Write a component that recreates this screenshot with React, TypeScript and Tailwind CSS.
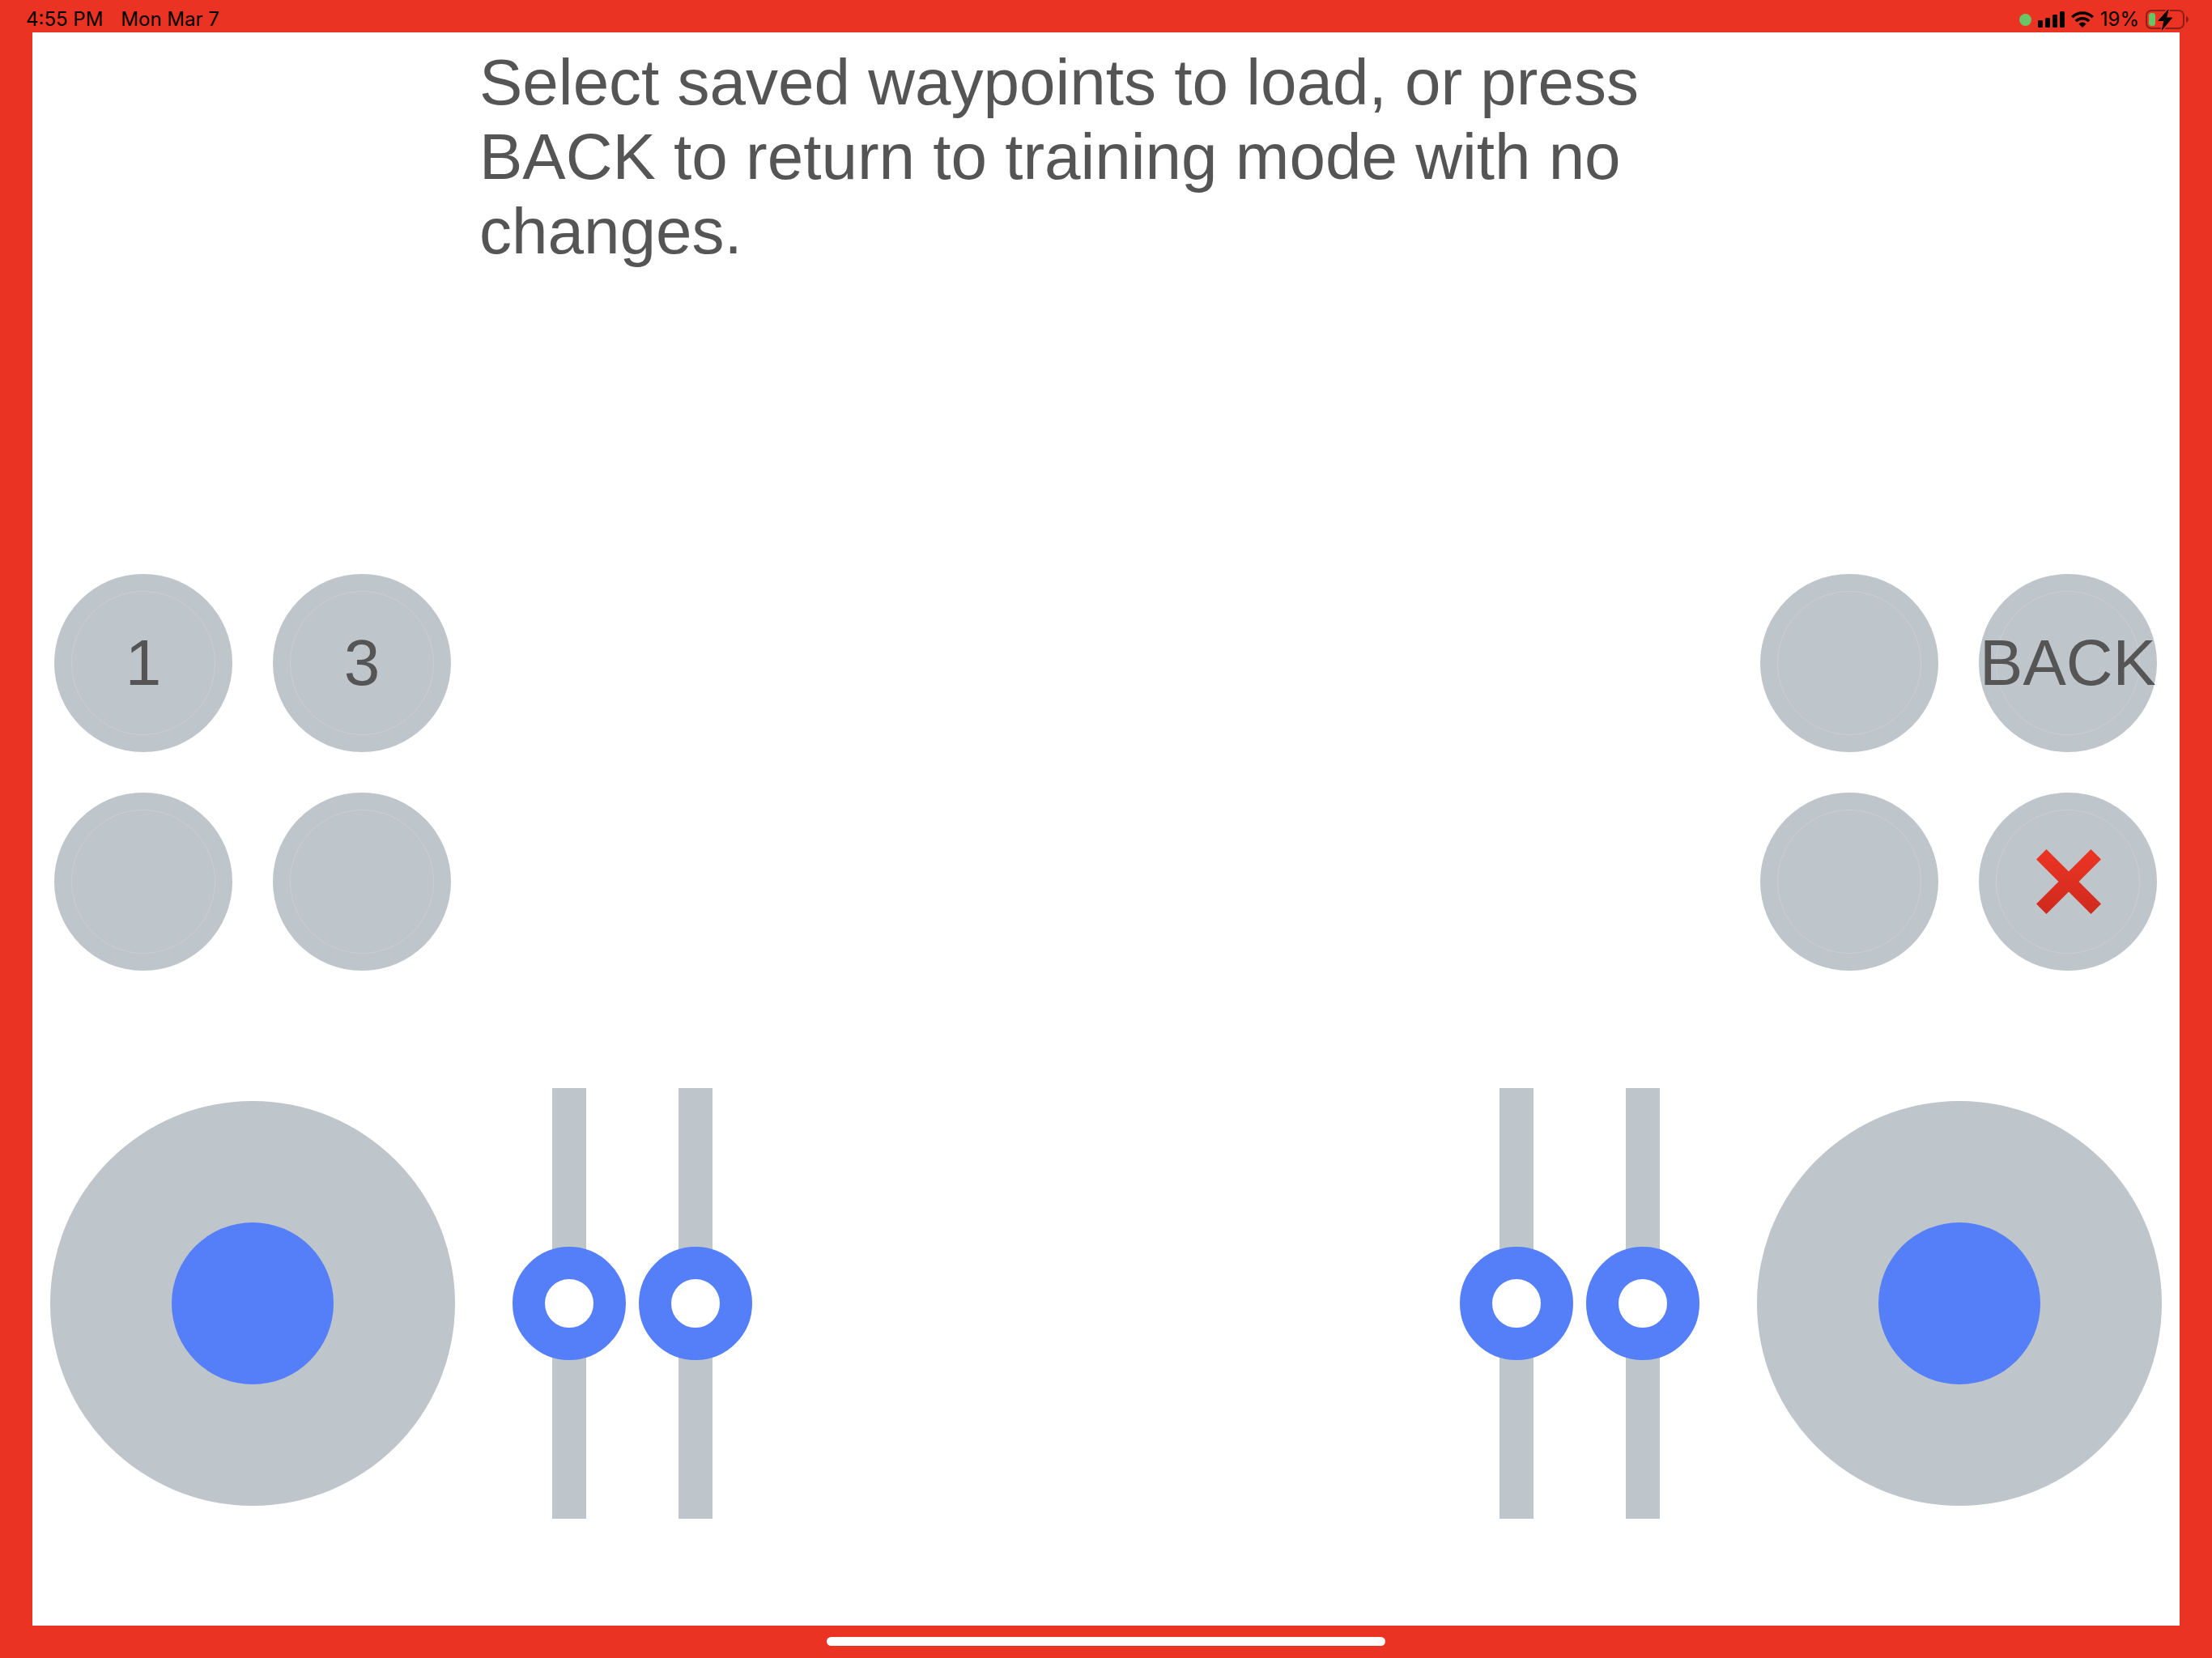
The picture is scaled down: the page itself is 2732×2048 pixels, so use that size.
import React from "react";

type PadKey = { id: string; label?: string; icon?: React.ReactNode };

function CrossMark() {
  return (
    <svg viewBox="0 0 82 80" className="h-20 w-[82px]" aria-hidden="true">
      <defs>
        <linearGradient id="cross" x1="0" y1="0" x2="0" y2="1">
          <stop offset="0" stopColor="#ec3524" />
          <stop offset="1" stopColor="#cf2a1e" />
        </linearGradient>
      </defs>
      <path
        d="M14.500 0 42 27.500 69.500 0 82 12.500 54.500 40 82 67.500 69.500 80 42 52.500 14.500 80 2 67.500 29.500 40 2 12.500Z"
        fill="url(#cross)"
      />
    </svg>
  );
}

function SignalIcon() {
  return (
    <svg viewBox="0 0 33 20" className="h-5 w-[33px]" aria-hidden="true">
      <rect x="0" y="11" width="6" height="9" rx="1.5" />
      <rect x="9" y="8" width="6" height="12" rx="1.5" />
      <rect x="18" y="4" width="6" height="16" rx="1.5" />
      <rect x="27" y="0" width="6" height="20" rx="1.5" />
    </svg>
  );
}

function WifiIcon() {
  return (
    <svg viewBox="0 0 28 20" className="h-5 w-7" aria-hidden="true">
      <g fill="none" stroke="#000" strokeWidth="3.6">
        <path d="M1.300 7.200a18.200 18.200 0 0 1 25.400 0" />
        <path d="M5.800 12a11.800 11.800 0 0 1 16.400 0" />
      </g>
      <path d="M14 20l-4.600-4.600a6.500 6.500 0 0 1 9.200 0z" />
    </svg>
  );
}

function BatteryIcon() {
  return (
    <svg viewBox="0 0 54 24" className="h-6 w-[54px] overflow-visible" aria-hidden="true">
      <rect x="1" y="1" width="46" height="22" rx="6" fill="none" stroke="#8f1f16" strokeWidth="2" />
      <path d="M50 8c4 1.500 4 6.500 0 8z" fill="#8f1f16" />
      <rect x="4" y="4" width="8" height="16" rx="3.500" fill="#69c466" />
      <path
        d="M28 0 16 13.500h7L20.500 24.500 32.500 10h-7z"
        fill="none"
        stroke="#ea3323"
        strokeWidth="4"
      />
      <path
        d="M28 0 16 13.500h7L20.500 24.500 32.500 10h-7z"
        fill="#000"
        stroke="#000"
        strokeLinejoin="round"
      />
    </svg>
  );
}

function StatusBar() {
  return (
    <header className="flex h-10 items-center justify-between pt-2 pr-7 pl-8 font-['Inter',sans-serif] text-[24px] leading-8 font-normal text-black">
      <div className="flex gap-[22px]">
        <time>4:55 PM</time>
        <span>Mon Mar 7</span>
      </div>
      <div className="flex items-center gap-2">
        <span className="size-[15px] rounded-full bg-[#69c466]" />
        <SignalIcon />
        <WifiIcon />
        <span>19%</span>
        <BatteryIcon />
      </div>
    </header>
  );
}

function KeyPad({ name, keys }: { name: string; keys: PadKey[] }) {
  return (
    <div role="group" aria-label={name} className="grid grid-cols-2 gap-[50px]">
      {keys.map((key) => (
        <button
          key={key.id}
          type="button"
          aria-label={key.label ?? key.id}
          className="grid size-[220px] place-items-center rounded-full bg-[#bec5cb] p-[21px] whitespace-nowrap"
        >
          <span className="flex size-[178px] items-center justify-center rounded-full border border-[#cad0d2]">
            {key.label ?? key.icon}
          </span>
        </button>
      ))}
    </div>
  );
}

function Joystick({ name }: { name: string }) {
  return (
    <div className="flex size-[500px] items-center justify-center rounded-full bg-[#bec5cb]">
      <button type="button" aria-label={name} className="size-[200px] rounded-full bg-[#557ff8]" />
    </div>
  );
}

function Fader({ name }: { name: string }) {
  return (
    <input
      type="range"
      min={-100}
      max={100}
      defaultValue={0}
      aria-label={name}
      className="h-[532px] w-[140px] appearance-none bg-[linear-gradient(to_right,transparent_49px,#bec5cb_49px,#bec5cb_91px,transparent_91px)] [direction:rtl] [writing-mode:vertical-lr] [&::-webkit-slider-thumb]:size-[140px] [&::-webkit-slider-thumb]:appearance-none [&::-webkit-slider-thumb]:rounded-full [&::-webkit-slider-thumb]:border-[40px] [&::-webkit-slider-thumb]:border-solid [&::-webkit-slider-thumb]:border-[#557ff8] [&::-webkit-slider-thumb]:bg-white"
    />
  );
}

const leftKeys: PadKey[] = [
  { id: "Slot 1", label: "1" },
  { id: "Slot 2", label: "3" },
  { id: "Slot 3" },
  { id: "Slot 4" },
];

const rightKeys: PadKey[] = [
  { id: "Action 1" },
  { id: "Back", label: "BACK" },
  { id: "Action 3" },
  { id: "Cancel", icon: <CrossMark /> },
];

export default function App() {
  return (
    <div className="flex min-h-screen flex-col bg-[#ea3323] font-['Liberation_Sans',Arial,sans-serif] text-[80px] leading-[92px] text-[#555]">
      <StatusBar />
      <main className="mx-10 flex flex-1 flex-col bg-white">
        <p className="px-[552px] pt-4">
          Select saved waypoints to load, or press BACK to return to training mode with no changes.
        </p>
        <section className="mt-auto flex justify-between pr-7 pl-[27px]">
          <KeyPad name="Saved waypoints" keys={leftKeys} />
          <KeyPad name="Actions" keys={rightKeys} />
        </section>
        <section className="mt-[145px] mb-[132px] flex items-center justify-between px-[22px]">
          <div className="flex items-center gap-[71px]">
            <Joystick name="Left joystick" />
            <div className="flex gap-4">
              <Fader name="Left outer slider" />
              <Fader name="Left inner slider" />
            </div>
          </div>
          <div className="flex items-center gap-[71px]">
            <div className="flex gap-4">
              <Fader name="Right inner slider" />
              <Fader name="Right outer slider" />
            </div>
            <Joystick name="Right joystick" />
          </div>
        </section>
      </main>
      <footer className="flex h-10 justify-center pt-3.5">
        <div className="h-[11px] w-[690px] rounded-full bg-[#fdfdfd]" />
      </footer>
    </div>
  );
}
